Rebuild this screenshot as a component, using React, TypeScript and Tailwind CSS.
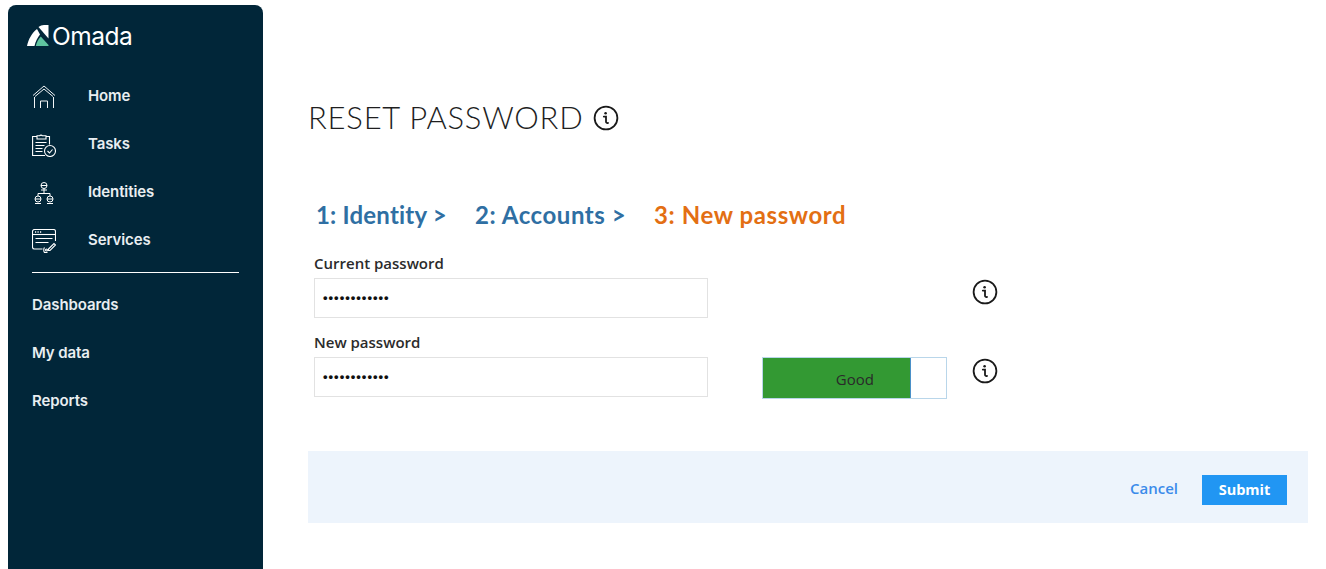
const InfoIcon = () => (
  <svg width="26" height="26" viewBox="0 0 26 26" fill="none" stroke="#1a1a1a">
    <circle cx="13" cy="13" r="11.4" strokeWidth="1.8" />
    <circle cx="12.6" cy="8.2" r="1.3" fill="#1a1a1a" stroke="none" />
    <path d="M10.8 11.6h2.2v5.2c0 1 .7 1.4 2 1.2" strokeWidth="1.8" strokeLinecap="round" />
  </svg>
)

const HomeIcon = () => (
  <svg width="24" height="24" viewBox="0 0 24 24" fill="none" stroke="#f2f5f7" strokeWidth="1">
    <path d="M1 10.500 12 1l11 9.500" />
    <path d="M3 11.500 12 4l9 7.500" />
    <path d="M2.500 23V12M21.500 23V12" />
    <path d="M8.500 23v-7h7v7" />
  </svg>
)

const TasksIcon = () => (
  <svg width="24" height="24" viewBox="0 0 24 24" fill="none" stroke="#ffffff" strokeWidth="1.1">
    <path d="M5 3.500H.6v19H13" />
    <path d="M14 3.500h3.500v8" />
    <path d="M5 6h9V2.800h-3.500a2 2 0 0 0-3 0H5z" />
    <path d="M3.500 9.500h11M3.500 12.500h9M3.500 15.500h7M3.500 18.500h7" />
    <circle cx="18" cy="18" r="5.500" />
    <path d="m15.500 18 2 2 3-3.500" />
  </svg>
)

const IdentitiesIcon = () => (
  <svg width="24" height="24" viewBox="0 0 24 24" fill="none" stroke="#ffffff" strokeWidth="1">
    <circle cx="12" cy="4.500" r="3" />
    <path d="M9 4.500h6M12 7.500v5M6 15v-2.500h12V15M9 9h6" />
    <circle cx="6" cy="18" r="3" />
    <circle cx="18" cy="18" r="3" />
    <path d="M3 18h6M15 18h6M3 22.500h6M15 22.500h6" />
  </svg>
)

const ServicesIcon = () => (
  <svg width="24" height="24" viewBox="0 0 24 24" fill="none" stroke="#ffffff" strokeWidth="1.100">
    <path d="M10.500 20H2.500a2 2 0 0 1-2-2V2.500a2 2 0 0 1 2-2h19a2 2 0 0 1 2 2V12" />
    <path d="M.5 5.500h23" />
    <path d="M3 3h1.200M5.500 3h1.200M8 3h1.200" strokeWidth="1.300" />
    <path d="M3.500 9.500h17M3.500 13.500h13" />
    <path d="m16.500 20 5.500-5.500 1.500 1.500-5.500 5.500h-1.500z" />
    <path d="M12.500 18.500c-1 1-1 4 0 5h3" />
    <circle cx="14.500" cy="21" r="1" />
  </svg>
)

const OmadaLogo = () => (
  <svg width="22" height="22" viewBox="0 0 22 22">
    <path d="M0 21C1.500 14 5 8 10 4l3 5.500C10.500 12.500 8.500 16.500 7.500 21z" fill="#ffffff" />
    <path d="M11.500 2C13 .8 15 0 17 0h4.500v13.500z" fill="#ffffff" />
    <path d="M8.800 21c.8-3.500 2.300-6.500 5-9.500l7.700 8.500v1z" fill="#5fc4a0" />
  </svg>
)

const mainNav = [
  { label: 'Home', icon: <HomeIcon /> },
  { label: 'Tasks', icon: <TasksIcon /> },
  { label: 'Identities', icon: <IdentitiesIcon /> },
  { label: 'Services', icon: <ServicesIcon /> }
]

const Sidebar = () => {
  return (
    <aside className="w-[255px] shrink-0 ml-2 mt-[5px] h-[564px] bg-[#012639] rounded-t-lg font-['Inter',sans-serif] font-semibold text-[15px] tracking-[-0.1px] text-[#e9eef1]">
      <div className="flex items-center gap-[3px] pl-[19px] pb-[5px] h-[67px]">
        <OmadaLogo />
        <span className="font-normal text-[24.5px] leading-[24px] tracking-[-0.5px] text-white">Omada</span>
      </div>
      <nav className="px-6">
        {mainNav.map(item => (
          <div key={item.label} className="flex items-center h-12">
            <div className="w-[56px] pt-[2px]">{item.icon}</div>
            <span>{item.label}</span>
          </div>
        ))}
        <div className="border-t border-white mt-2 mb-2 w-[207px]"></div>
        <div className="flex items-center h-12">Dashboards</div>
        <div className="flex items-center h-12">My data</div>
        <div className="flex items-center h-12">Reports</div>
      </nav>
    </aside>
  )
}

const PasswordField = ({ label }: { label: string }) => {
  return (
    <div className="w-[394px]">
      <label className="block h-[24px] text-[15px] font-semibold leading-[18px] text-[#2b2b2b]">{label}</label>
      <div className="h-10 border border-[#e2e2e2] bg-white flex items-center pl-[8px] text-[#111] text-[13px] font-bold tracking-[1px] font-['Liberation_Sans',sans-serif]">
        ••••••••••••
      </div>
    </div>
  )
}

export default function App() {
  return (
    <div className="flex w-[1326px] h-[569px] overflow-hidden bg-white font-['Open_Sans',sans-serif]">
      <Sidebar />
      <main className="ml-[45px] w-[1000px]">
        <div className="flex items-center gap-[10px] mt-[97px] h-[40px]">
          <h1 className="font-['Lato',sans-serif] font-light text-[31px] tracking-[0.75px] text-[#1f1f1f]">RESET PASSWORD</h1>
          <div className="pt-[2px]"><InfoIcon /></div>
        </div>
        <div className="flex mt-[58px] ml-2 h-[40px] items-center font-['Lato',sans-serif] font-bold text-[24px] text-[#2f6fa3]">
          <span className="w-[159px] tracking-[0.2px]">1: Identity &gt;</span>
          <span className="w-[179px] tracking-[0.55px]">2: Accounts &gt;</span>
          <span className="text-[#e36f13] tracking-[0.6px]">3: New password</span>
        </div>
        <div className="mt-[19px] ml-[6px] flex">
          <PasswordField label="Current password" />
          <div className="ml-[264px] mt-[25px]"><InfoIcon /></div>
        </div>
        <div className="mt-[15px] ml-[6px] flex">
          <PasswordField label="New password" />
          <div className="ml-[54px] mt-[24px] w-[185px] h-[42px] border border-[#b9d6ea] flex">
            <div className="w-[148px] bg-[#339933] border-r border-[#4a90c8] flex items-center justify-end pt-[3px] pr-[36px] text-[15px] text-[#2a2a2a]">Good</div>
          </div>
          <div className="ml-[25px] mt-[25px]"><InfoIcon /></div>
        </div>
        <div className="mt-[52px] w-[1000px] h-[72px] bg-[#edf4fc] flex items-center justify-end pr-[21px]">
          <span className="text-[#3b8bea] text-[15px] font-semibold mr-[24px] mt-[2px]">Cancel</span>
          <button className="w-[85px] h-[30px] mt-[6px] bg-[#2196f3] text-white text-[14.5px] font-bold">Submit</button>
        </div>
      </main>
    </div>
  )
}
